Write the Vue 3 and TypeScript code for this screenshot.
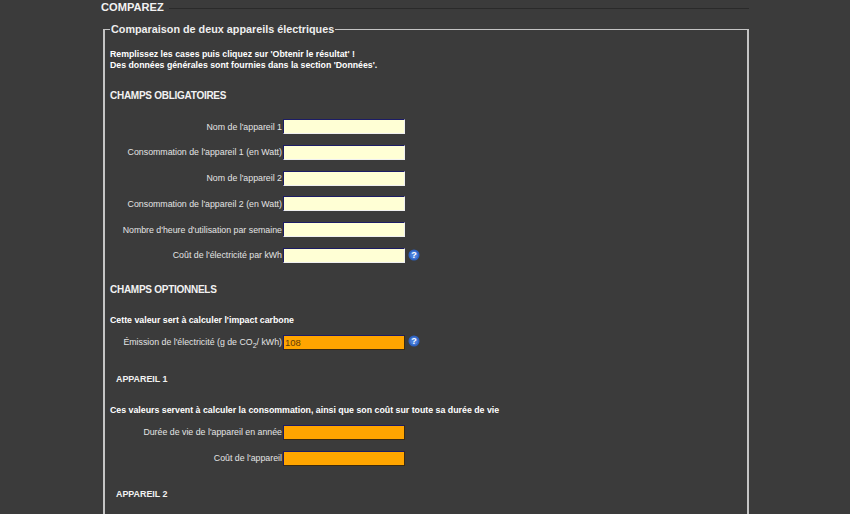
<script setup lang="ts">
interface Field { label: string; help?: boolean }
const required: Field[] = [
  { label: "Nom de l'appareil 1" },
  { label: "Consommation de l'appareil 1 (en Watt)" },
  { label: "Nom de l'appareil 2" },
  { label: "Consommation de l'appareil 2 (en Watt)" },
  { label: "Nombre d'heure d'utilisation par semaine" },
  { label: "Coût de l'électricité par kWh", help: true },
]
const device: Field[] = [
  { label: "Durée de vie de l'appareil en année" },
  { label: "Coût de l'appareil" },
]
</script>

<template>
  <div class="page">
    <main class="content">
      <h1 class="title"><span>COMPAREZ</span></h1>
      <fieldset class="box">
        <legend>Comparaison de deux appareils électriques</legend>
        <p class="intro">Remplissez les cases puis cliquez sur 'Obtenir le résultat' !<br />Des données générales sont fournies dans la section 'Données'.</p>
        <h2 class="sect first">CHAMPS OBLIGATOIRES</h2>
        <div class="rows">
          <div v-for="f in required" :key="f.label" class="row">
            <label>{{ f.label }}</label>
            <input class="inp" type="text" />
            <svg v-if="f.help" class="help" viewBox="0 0 12 12" width="12" height="12"><circle cx="6" cy="6" r="5.5" fill="#2f62c0" /><circle cx="6" cy="6" r="3.8" fill="#4a80dc" /><text x="6" y="9.3" text-anchor="middle" class="q">?</text></svg>
          </div>
        </div>
        <h2 class="sect opt">CHAMPS OPTIONNELS</h2>
        <p class="note n1">Cette valeur sert à calculer l'impact carbone</p>
        <div class="row">
          <label>Émission de l'électricité (g de CO<sub>2</sub>/ kWh)</label>
          <input class="inp orange" type="text" value="108" />
          <svg class="help up" viewBox="0 0 12 12" width="12" height="12"><circle cx="6" cy="6" r="5.5" fill="#2f62c0" /><circle cx="6" cy="6" r="3.8" fill="#4a80dc" /><text x="6" y="9.3" text-anchor="middle" class="q">?</text></svg>
        </div>
        <h3 class="dev d1">APPAREIL 1</h3>
        <p class="note n2">Ces valeurs servent à calculer la consommation, ainsi que son coût sur toute sa durée de vie</p>
        <div class="rows">
          <div v-for="f in device" :key="f.label" class="row">
            <label>{{ f.label }}</label>
            <input class="inp orange" type="text" />
          </div>
        </div>
        <h3 class="dev d2">APPAREIL 2</h3>
      </fieldset>
    </main>
  </div>
</template>

<style>
html, body { margin: 0; background: #3b3b3b; overflow: hidden; }
</style>

<style scoped>
.page {
  height: 514px;
  overflow: hidden;
  background: #3b3b3b;
  color: #fff;
  font-family: "Liberation Sans", Arial, sans-serif;
  font-size: 9px;
}
.content { width: 648px; margin-left: 101px; }
.title {
  margin: 0;
  height: 8px;
  border-bottom: 1px solid #2a2a2a;
  font-size: 11.1px;
  line-height: 14px;
  font-weight: bold;
  color: #f2f2f2;
}
.title span { background: #3b3b3b; padding: 0 5px 0 0; display: inline-block; }
.box {
  margin: 14px 0 0 2px;
  padding: 0 0 0 5px;
  width: 646px;
  box-sizing: border-box;
  height: 520px;
  border: 1px solid #c4c4c4;
  border-width: 1px 2px 2px 2px;
}
legend {
  padding: 0 1px;
  margin-left: 0;
  font-size: 10.8px;
  line-height: 13px;
  font-weight: bold;
  color: #eee;
}
.intro {
  margin: 13px 0 0;
  line-height: 11px;
  font-weight: bold;
  font-size: 8.75px;
}
.sect { margin: 0; font-size: 10px; letter-spacing: -0.27px; line-height: 12px; font-weight: bold; color: #f2f2f2; }
.first { margin-top: 19px; }
.rows { display: flex; flex-direction: column; }
.first + .rows { margin-top: 17px; }
.rows .row + .row { margin-top: 10.8px; }
.row { display: flex; align-items: center; height: 15px; }
.row label {
  width: 172px;
  margin-right: 1px;
  text-align: right;
  white-space: nowrap;
  color: #e4e4e4;
  font-size: 8.8px;
  line-height: 12px;
}
.row label sub { font-size: 7px; line-height: 0; }
.inp {
  width: 122px;
  height: 15px;
  box-sizing: border-box;
  margin: 0;
  padding: 0 1px;
  background: #ffffd5;
  border: 1px solid;
  border-color: #1c1c66 #f0f0f0 #f0f0f0 #1c1c66;
  font-family: "Liberation Sans", Arial, sans-serif;
  font-size: 9.5px;
  color: #5f3c0a;
  outline: none;
}
.orange { background: #ffa500; border-color: #1c1c66 #3b2a10 #3b2a10 #1c1c66; }
.help { margin-left: 3px; }
.up { margin-top: -2px; }
.q { font: bold 9px "Liberation Sans", Arial, sans-serif; fill: #fff; }
.opt { margin-top: 21px; }
.note { margin: 0; font-weight: bold; font-size: 8.8px; line-height: 11px; }
.n1 { margin-top: 19px; margin-bottom: 9px; }
.dev { margin: 0 0 0 6px; font-size: 8.9px; line-height: 11px; font-weight: bold; color: #f2f2f2; }
.d1 { margin-top: 24px; }
.n2 { margin-top: 20px; margin-bottom: 9px; }
.d2 { margin-top: 23px; }
</style>
